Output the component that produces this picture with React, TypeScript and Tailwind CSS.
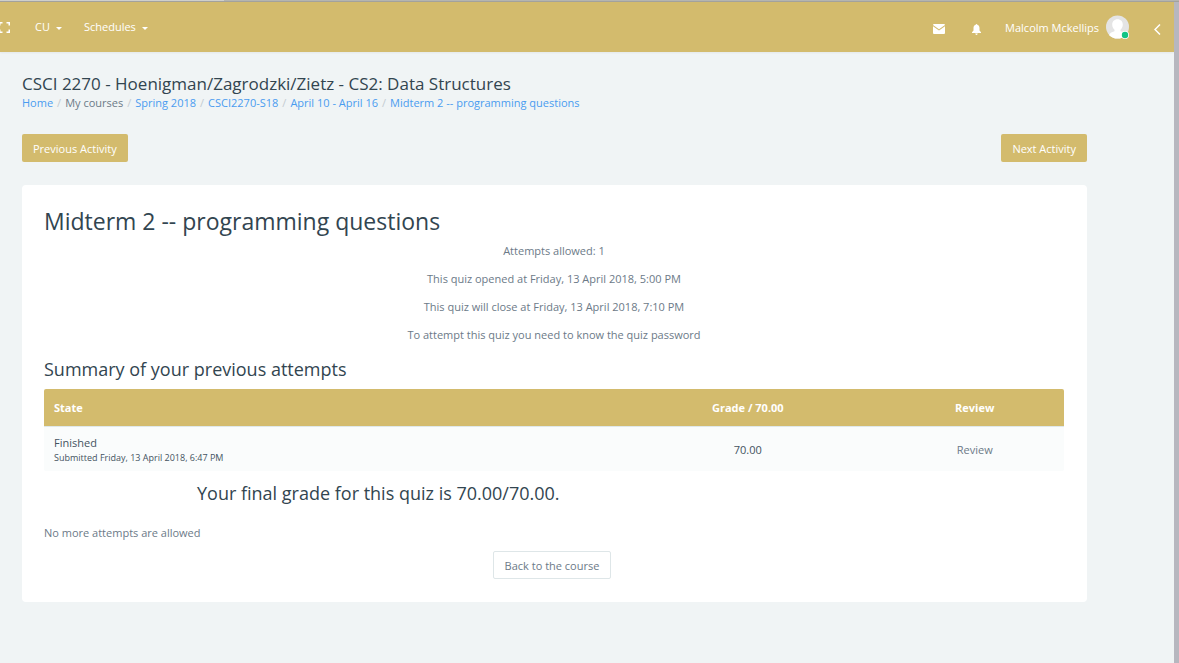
import React from "react";

const crumbs = [
  { label: "Home", link: true },
  { label: "My courses", link: false },
  { label: "Spring 2018", link: true },
  { label: "CSCI2270-S18", link: true },
  { label: "April 10 - April 16", link: true },
  { label: "Midterm 2 -- programming questions", link: true },
];

const info = [
  "Attempts allowed: 1",
  "This quiz opened at Friday, 13 April 2018, 5:00 PM",
  "This quiz will close at Friday, 13 April 2018, 7:10 PM",
  "To attempt this quiz you need to know the quiz password",
];

function Caret() {
  return (
    <svg width="6" height="3" viewBox="0 0 6 3" fill="currentColor" aria-hidden="true" className="mt-0.5">
      <path d="M0 0h6L3 3z" />
    </svg>
  );
}

function Header() {
  return (
    <header className="flex h-[50px] items-center justify-between bg-[#d3bb6d] pr-[13px] text-white shadow-xs">
      <nav className="flex items-center">
        <button type="button" aria-label="Toggle full screen" className="-ml-px">
          <svg width="11" height="11" viewBox="0 0 11 11" fill="none" stroke="currentColor" strokeWidth="1.5" aria-hidden="true">
            <path d="M0.75 3.5V0.75H3.5M7.5 0.75h2.75V3.5M10.25 7.5v2.75H7.5M3.5 10.25H0.75V7.5" />
          </svg>
        </button>
        <button type="button" className="ml-[25px] flex items-center gap-1.5">
          CU <Caret />
        </button>
        <button type="button" className="ml-[22px] flex items-center gap-1.5">
          Schedules <Caret />
        </button>
      </nav>
      <div className="flex items-center">
        <button type="button" aria-label="Messages" className="mt-1">
          <svg width="12" height="10" viewBox="0 0 12 10" fill="currentColor" aria-hidden="true">
            <path d="M1 0h10a1 1 0 0 1 1 .9L6 5.2 0 .9A1 1 0 0 1 1 0zM0 2.3l6 4.3 6-4.3V9a1 1 0 0 1-1 1H1a1 1 0 0 1-1-1z" />
          </svg>
        </button>
        <button type="button" aria-label="Notifications" className="mt-1 ml-[27px]">
          <svg width="9" height="11" viewBox="0 0 9 11" fill="currentColor" aria-hidden="true">
            <path d="M4.500 0c.5 0 .8.3.8.8C6.900 1.200 7.500 2.500 7.500 4v2.500L9 8.200V9H0v-.8l1.500-1.700V4c0-1.500.6-2.800 2.200-3.200 0-.5.3-.8.8-.8zM3.300 9.600h2.400c0 .8-.5 1.400-1.200 1.400s-1.200-.6-1.200-1.400z" />
          </svg>
        </button>
        <button type="button" className="ml-6 flex items-center gap-[7px]">
          <span className="pt-0.5">Malcolm Mckellips</span>
          <svg width="24" height="24" viewBox="0 0 24 24" aria-hidden="true">
            <clipPath id="avatar">
              <circle cx="11.500" cy="12" r="11.500" />
            </clipPath>
            <g clipPath="url(#avatar)">
              <path d="M0 0h24v24H0z" fill="#e4e4e4" />
              <path d="M11.500 4.200c3.300 0 5.300 2.300 5.300 5.400 0 2.300-1 4.200-2.300 5.200v1.500c3 .6 5 2.200 5.500 4.200V24H3v-3.500c.5-2 2.500-3.600 5.500-4.200v-1.500c-1.300-1-2.300-2.900-2.300-5.200 0-3.100 2-5.400 5.300-5.400z" fill="#fff" />
            </g>
            <circle cx="19" cy="20" r="4" fill="#fff" />
            <circle cx="19" cy="20" r="3.200" fill="#10c484" />
          </svg>
        </button>
        <button type="button" aria-label="Open side panel" className="mt-1 ml-6">
          <svg width="7" height="11" viewBox="0 0 7 11" fill="none" stroke="currentColor" strokeWidth="1.500" aria-hidden="true">
            <path d="M6 0.500L1 5.500l5 5" />
          </svg>
        </button>
      </div>
    </header>
  );
}

export default function App() {
  return (
    <div className="flex min-h-screen flex-col bg-[#f0f4f5] font-['Open_Sans',sans-serif] text-[11px] leading-4 text-[#6c7a88]">
      <div className="flex h-0.5 border-b border-[#a3a29c] bg-[#cfcfcb]">
        <div className="w-[19%]" />
        <div className="flex-1 bg-[#b5b5b0]" />
      </div>
      <div className="flex flex-1">
        <div className="min-w-0 flex-1">
          <Header />
          <main className="pt-5 pr-[87px] pb-[61px] pl-[22px]">
            <h1 className="text-[17px] leading-[23px] text-[#324550]">
              CSCI 2270 - Hoenigman/Zagrodzki/Zietz - CS2: Data Structures
            </h1>
            <nav aria-label="Breadcrumb">
              <ol className="flex flex-wrap">
                {crumbs.map((c, i) => (
                  <li key={c.label} className="flex">
                    {i > 0 && <span className="px-1 text-[#c3cbd1]">/</span>}
                    {c.link ? (
                      <a href="#" className="text-[#4a9cf0]">{c.label}</a>
                    ) : (
                      <span>{c.label}</span>
                    )}
                  </li>
                ))}
              </ol>
            </nav>
            <div className="mt-[23px] flex justify-between text-white">
              <button type="button" className="h-7 rounded-xs bg-[#d3bb6d] px-[11px] pt-0.5">Previous Activity</button>
              <button type="button" className="h-7 rounded-xs bg-[#d3bb6d] px-[11px] pt-0.5">Next Activity</button>
            </div>
            <section className="mt-[23px] rounded-sm bg-white pt-5 pr-[23px] pb-[23px] pl-[22px]">
              <h2 className="text-[23px] leading-8 text-[#324550]">Midterm 2 -- programming questions</h2>
              <div className="mt-1.5 flex flex-col gap-3 text-center">
                {info.map((line) => (
                  <p key={line}>{line}</p>
                ))}
              </div>
              <h3 className="mt-3.5 text-[18px] leading-6 text-[#324550]">Summary of your previous attempts</h3>
              <table className="mt-2 w-full table-fixed overflow-hidden rounded-xs text-[#44535f]">
                <colgroup>
                  <col />
                  <col className="w-[27%]" />
                  <col className="w-[17.500%]" />
                </colgroup>
                <thead>
                  <tr className="h-[37px] bg-[#d3bb6d] text-white">
                    <th className="px-2.5 pt-0.5 text-left font-bold">State</th>
                    <th className="pt-0.5 font-bold">Grade / 70.00</th>
                    <th className="pt-0.5 font-bold">Review</th>
                  </tr>
                </thead>
                <tbody>
                  <tr className="h-[45px] border-t border-[#dfe8ea] bg-[#fafcfc]">
                    <td className="px-2.5 pt-0.5">
                      <div>Finished</div>
                      <div className="text-[9px] leading-[14px]">Submitted Friday, 13 April 2018, 6:47 PM</div>
                    </td>
                    <td className="pt-0.5 text-center">70.00</td>
                    <td className="pt-0.5 text-center">
                      <a href="#" className="text-[#6c7a88]">Review</a>
                    </td>
                  </tr>
                </tbody>
              </table>
              <h3 className="mt-2.5 pl-[15%] text-[18px] leading-6 text-[#324550]">
                Your final grade for this quiz is 70.00/70.00.
              </h3>
              <p className="mt-5">No more attempts are allowed</p>
              <div className="mt-2.5 flex justify-center pr-1">
                <button type="button" className="h-7 rounded-xs border border-[#dee6e8] bg-white px-[11px] pt-0.5">
                  Back to the course
                </button>
              </div>
            </section>
          </main>
        </div>
        <div className="w-[5px] bg-[#b7b7bf]" />
      </div>
    </div>
  );
}
